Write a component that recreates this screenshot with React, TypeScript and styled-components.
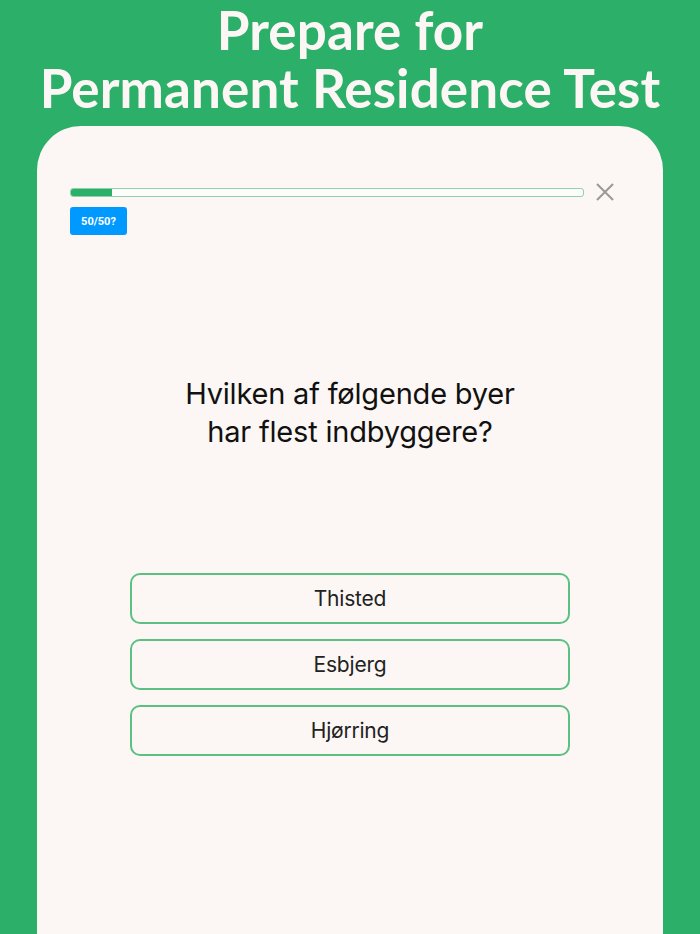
import React from "react";
import styled, { createGlobalStyle } from "styled-components";

const Global = createGlobalStyle`
  html, body {
    margin: 0;
    padding: 0;
    background: #2caf68;
  }
  #root {
    width: 700px;
    height: 934px;
    overflow: hidden;
  }
`;

const Page = styled.div`
  width: 700px;
  height: 934px;
  background: #2caf68;
  display: flex;
  flex-direction: column;
  align-items: center;
`;

const Title = styled.h1`
  margin: 0;
  padding-top: 1px;
  font-family: Lato, "Open Sans", sans-serif;
  font-weight: 700;
  font-size: 53px;
  line-height: 58px;
  letter-spacing: 0.1px;
  color: #fcf7f4;
  text-align: center;
`;

const Card = styled.div`
  margin-top: 9px;
  width: 626px;
  flex: 1;
  background: #fcf7f4;
  border-radius: 44px 44px 0 0;
  padding: 57px 33px 0;
  box-sizing: border-box;
  display: flex;
  flex-direction: column;
`;

const TopRow = styled.div`
  display: flex;
  align-items: center;
  gap: 12px;
`;

const Track = styled.div`
  flex: 1;
  height: 9px;
  border: 1px solid #8fd0ad;
  border-radius: 3px;
  background: #fcfcfb;
  box-sizing: border-box;
  overflow: hidden;
`;

const Fill = styled.div`
  height: 100%;
  background: #2caf68;
`;

const Close = styled.button`
  width: 18px;
  height: 18px;
  padding: 0;
  margin-right: 16px;
  border: none;
  background: none;
  display: flex;
  align-items: center;
  justify-content: center;
`;

const Hint = styled.button`
  margin-top: 6px;
  align-self: flex-start;
  width: 57px;
  height: 28px;
  border: none;
  border-radius: 3px;
  background: #0099ff;
  color: #fff;
  font-family: Roboto, "Liberation Sans", sans-serif;
  font-weight: 700;
  font-size: 11px;
  padding: 0;
`;

const Question = styled.div`
  margin-top: 140px;
  font-family: Inter, "Liberation Sans", sans-serif;
  font-size: 29px;
  line-height: 38px;
  color: #111;
  text-align: center;
  letter-spacing: -0.2px;
`;

const Options = styled.div`
  margin-top: 122px;
  display: flex;
  flex-direction: column;
  align-items: center;
  gap: 15px;
`;

const Option = styled.button`
  width: 440px;
  height: 51px;
  border: 2px solid #5cc083;
  border-radius: 10px;
  background: transparent;
  font-family: Inter, "Liberation Sans", sans-serif;
  font-size: 21px;
  color: #222;
  letter-spacing: -0.2px;
`;

const answers = ["Thisted", "Esbjerg", "Hjørring"];

export default function App() {
  const progress = 8;
  return (
    <Page>
      <Global />
      <Title>
        Prepare for
        <br />
        Permanent Residence Test
      </Title>
      <Card>
        <TopRow>
          <Track>
            <Fill style={{ width: `${progress}%` }} />
          </Track>
          <Close aria-label="close">
            <svg width="18" height="18" viewBox="0 0 18 18">
              <path d="M1 1 L17 17 M17 1 L1 17" stroke="#999" strokeWidth="2" fill="none" />
            </svg>
          </Close>
        </TopRow>
        <Hint>50/50?</Hint>
        <Question>
          Hvilken af følgende byer
          <br />
          har flest indbyggere?
        </Question>
        <Options>
          {answers.map((a) => (
            <Option key={a}>{a}</Option>
          ))}
        </Options>
      </Card>
    </Page>
  );
}
